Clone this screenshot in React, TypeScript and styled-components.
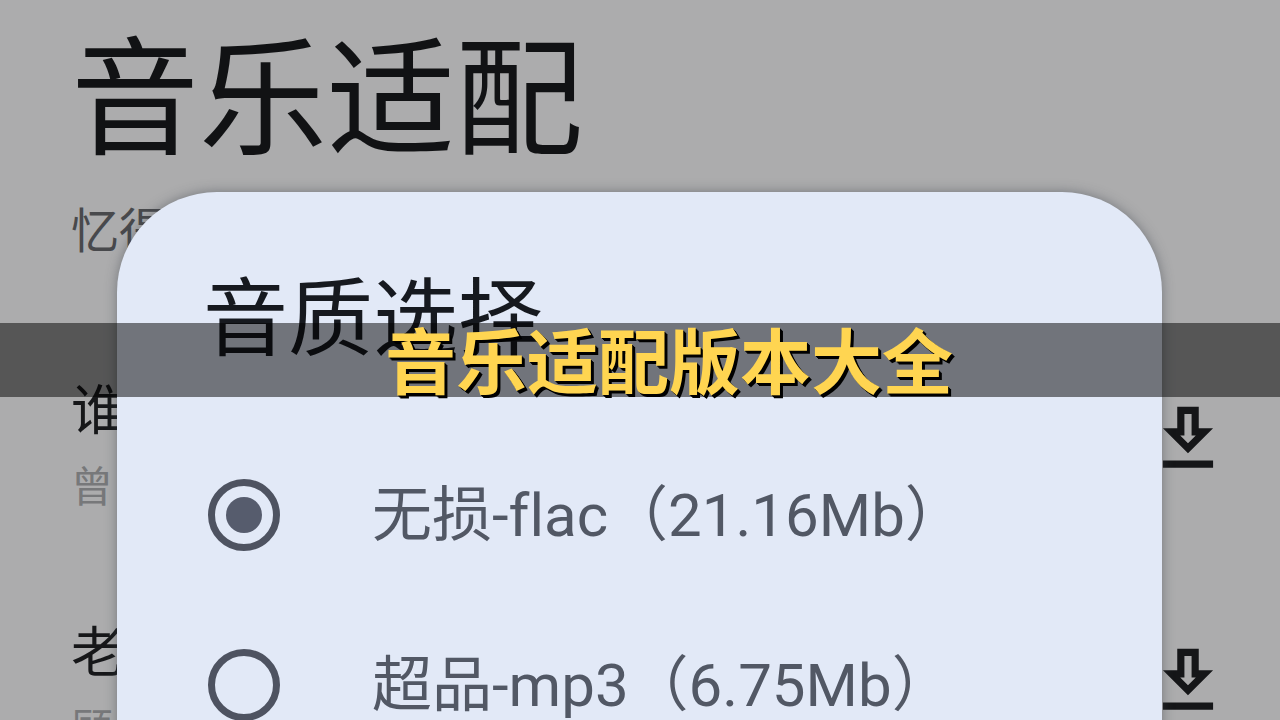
import React, { useState } from "react";
import styled, { createGlobalStyle } from "styled-components";

const GlobalStyle = createGlobalStyle`
  * { box-sizing: border-box; }
  body {
    margin: 0;
    background: #acacad;
    font-family: Roboto, "Noto Sans CJK SC", sans-serif;
  }
`;

const Screen = styled.div`
  position: relative;
  height: 100vh;
  overflow: hidden;
  background: #acacad;
`;

const Page = styled.main`
  display: flex;
  flex-direction: column;
  padding: 37px 49px 0 71px;
`;

const PageTitle = styled.h1`
  margin: 0;
  font-size: 128px;
  line-height: 128px;
  font-weight: 400;
  color: #111214;
`;

const Subtitle = styled.p`
  margin: 37px 0 0;
  font-size: 48px;
  line-height: 60px;
  color: #48494c;
`;

const SongList = styled.ul`
  display: flex;
  flex-direction: column;
  margin: 118px 0 0;
  padding: 0;
  list-style: none;
`;

const SongRow = styled.li`
  display: flex;
  justify-content: space-between;
  align-items: flex-start;
  height: 242px;
`;

const SongText = styled.div`
  display: flex;
  flex-direction: column;
  gap: 16px;
`;

const SongName = styled.span`
  font-size: 54px;
  line-height: 64px;
  color: #161719;
`;

const Artist = styled.span`
  font-size: 42px;
  line-height: 56px;
  color: #77787a;
`;

const DownloadButton = styled.button`
  margin: 16px 0 0;
  padding: 0;
  border: 0;
  background: none;
  color: #151618;
  line-height: 0;
`;

const Dialog = styled.section`
  position: absolute;
  top: 192px;
  left: 117px;
  right: 118px;
  display: flex;
  flex-direction: column;
  min-height: 800px;
  padding: 78px 91px;
  border-radius: 100px;
  background: #e2e9f7;
  box-shadow: 0 0 12px rgba(60, 66, 76, 0.5);
`;

const DialogTitle = styled.h2`
  margin: 0 0 74px -5px;
  font-size: 85px;
  line-height: 100px;
  font-weight: 400;
  color: #16191f;
`;

const Option = styled.label`
  display: flex;
  align-items: center;
  gap: 92px;
  height: 142px;
  margin-bottom: 28px;
  font-size: 60px;
  line-height: 70px;
  font-variant-ligatures: none;
  color: #525865;
  white-space: nowrap;
`;

const OptionText = styled.span`
  padding-top: 2px;
`;

const Radio = styled.input`
  appearance: none;
  flex: none;
  display: grid;
  place-items: center;
  width: 72px;
  height: 72px;
  margin: 0;
  border: 7px solid #4e5361;
  border-radius: 50%;

  &:checked::before {
    content: "";
    width: 36px;
    height: 36px;
    border-radius: 50%;
    background: #565c6d;
  }
`;

const Banner = styled.div`
  position: absolute;
  top: 323px;
  left: 0;
  right: 0;
  height: 74px;
  padding-left: 58px;
  background: rgba(0, 0, 0, 0.5);
  color: #ffd551;
  font-family: "Noto Sans CJK SC", sans-serif;
  font-size: 71px;
  line-height: 68px;
  font-weight: 700;
  text-align: center;
  text-shadow: 1px 1px 0 #000, 2px 2px 0 #000, 3px 3px 0 #000;
  white-space: nowrap;
`;

const DownloadIcon = () => (
  <svg width="86" height="86" viewBox="0 0 24 24" fill="currentColor" aria-hidden="true">
    <path d="M13 5v6h1.17L12 13.17 9.83 11H11V5h2m2-2H9v6H5l7 7 7-7h-4V3zm4 15H5v2h14v-2z" />
  </svg>
);

const songs = [
  { name: "谁", artist: "曾" },
  { name: "老", artist: "顾" },
];

const qualities = [
  { id: "flac", label: "无损-flac（21.16Mb）" },
  { id: "mp3", label: "超品-mp3（6.75Mb）" },
];

export default function App() {
  const [quality, setQuality] = useState("flac");

  return (
    <Screen>
      <GlobalStyle />
      <Page>
        <PageTitle>音乐适配</PageTitle>
        <Subtitle>忆得</Subtitle>
        <SongList>
          {songs.map((song) => (
            <SongRow key={song.name}>
              <SongText>
                <SongName>{song.name}</SongName>
                <Artist>{song.artist}</Artist>
              </SongText>
              <DownloadButton type="button" aria-label="下载">
                <DownloadIcon />
              </DownloadButton>
            </SongRow>
          ))}
        </SongList>
      </Page>
      <Dialog role="dialog" aria-labelledby="quality-title">
        <DialogTitle id="quality-title">音质选择</DialogTitle>
        {qualities.map((q) => (
          <Option key={q.id} htmlFor={q.id}>
            <Radio
              type="radio"
              id={q.id}
              name="quality"
              checked={quality === q.id}
              onChange={() => setQuality(q.id)}
            />
            <OptionText>{q.label}</OptionText>
          </Option>
        ))}
      </Dialog>
      <Banner>音乐适配版本大全</Banner>
    </Screen>
  );
}
